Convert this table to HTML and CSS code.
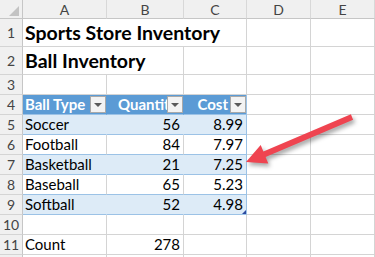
FILE: index.html
```html
<!DOCTYPE html>
<html lang="en">
<head>
<meta charset="utf-8">
<title>Sports Store Inventory</title>
<link rel="stylesheet" href="styles.css">
</head>
<body>
<div class="page">
<table class="sheet">
  <colgroup>
    <col class="c-rh"><col class="c-a"><col class="c-b"><col class="c-c"><col class="c-d"><col class="c-e">
  </colgroup>
  <thead>
    <tr class="colhead">
      <th class="corner"><svg class="corner-tri" width="10" height="10" viewBox="0 0 10 10"><polygon points="10,0 10,10 0,10" fill="#c3c3c3"/></svg></th>
      <th>A</th><th>B</th><th>C</th><th>D</th><th>E</th>
    </tr>
  </thead>
  <tbody>
    <tr class="tall">
      <th class="rh">1</th>
      <td class="title" colspan="3">Sports Store Inventory</td><td></td><td></td>
    </tr>
    <tr class="tall">
      <th class="rh">2</th>
      <td class="title" colspan="2">Ball Inventory</td><td></td><td></td><td></td>
    </tr>
    <tr>
      <th class="rh">3</th><td></td><td></td><td></td><td></td><td></td>
    </tr>
    <tr class="thead-row">
      <th class="rh">4</th>
      <td class="hcell">Ball Type<span class="filter"></span></td>
      <td class="hcell qty">Quantity<span class="filter"></span></td>
      <td class="hcell right edge">Cost<span class="filter"></span></td>
      <td></td><td></td>
    </tr>
    <tr class="band">
      <th class="rh">5</th>
      <td class="tc">Soccer</td><td class="tc num">56</td><td class="tc num edge">8.99</td><td></td><td></td>
    </tr>
    <tr class="plain">
      <th class="rh">6</th>
      <td class="tc">Football</td><td class="tc num">84</td><td class="tc num edge">7.97</td><td></td><td></td>
    </tr>
    <tr class="band">
      <th class="rh">7</th>
      <td class="tc">Basketball</td><td class="tc num">21</td><td class="tc num edge">7.25</td><td></td><td></td>
    </tr>
    <tr class="plain">
      <th class="rh">8</th>
      <td class="tc">Baseball</td><td class="tc num">65</td><td class="tc num edge">5.23</td><td></td><td></td>
    </tr>
    <tr class="band">
      <th class="rh">9</th>
      <td class="tc">Softball</td><td class="tc num">52</td><td class="tc num edge last">4.98<span class="handle"></span></td><td></td><td></td>
    </tr>
    <tr>
      <th class="rh">10</th><td></td><td></td><td></td><td></td><td></td>
    </tr>
    <tr>
      <th class="rh">11</th><td>Count</td><td class="num">278</td><td></td><td></td><td></td>
    </tr>
    <tr>
      <th class="rh"></th><td></td><td></td><td></td><td></td><td></td>
    </tr>
  </tbody>
</table>
<svg class="arrow" width="375" height="257" viewBox="0 0 375 257">
  <polygon points="350.9,114.2 263.4,151.5 260.7,145.1 246,162 268.3,163.5 265.6,157.1 353.1,119.8" fill="#ef4450"/>
</svg>
</div>
</body>
</html>
```
FILE: styles.css
```css
html, body {
  margin: 0;
  padding: 0;
  background: #ffffff;
}
body {
  width: 375px;
  height: 257px;
  overflow: hidden;
  font-family: Lato, "Liberation Sans", sans-serif;
  color: #000;
}
.page {
  position: relative;
  width: 375px;
  height: 257px;
  overflow: hidden;
}
.sheet {
  border-collapse: separate;
  border-spacing: 0;
  table-layout: fixed;
  width: 375px;
  font-size: 15px;
}
.c-rh { width: 23px; }
.c-a { width: 84px; }
.c-b { width: 77px; }
.c-c { width: 63px; }
.c-d { width: 64px; }
.c-e { width: 64px; }

.sheet th, .sheet td {
  box-sizing: border-box;
  padding: 0 2px 1px 2px;
  border-right: 1px solid #d4d4d4;
  border-bottom: 1px solid #d4d4d4;
  white-space: nowrap;
  overflow: visible;
  vertical-align: bottom;
  line-height: 17px;
  font-weight: normal;
  text-align: left;
}
.sheet tr { height: 20px; }
.sheet tr.tall { height: 28px; }
.sheet tr.colhead { height: 19px; }

.sheet .colhead th {
  background: #f0f0f0;
  color: #444;
  font-size: 14px;
  text-align: center;
  vertical-align: middle;
  padding: 0;
  border-bottom: 1px solid #c6c6c6;
  border-right: 1px solid #d8d8d8;
}
.sheet .colhead th.corner {
  position: relative;
  border-right: 1px solid #c6c6c6;
}
.corner-tri {
  position: absolute;
  right: 3px;
  bottom: 2px;
}
.sheet .rh {
  background: #f0f0f0;
  color: #444;
  font-size: 14px;
  text-align: center;
  vertical-align: middle;
  padding: 0;
  border-right: 1px solid #c6c6c6;
}
.sheet .title {
  font-weight: bold;
  font-size: 19.5px;
  line-height: 24px;
  padding-bottom: 1px;
}
.sheet .num { text-align: right; padding-right: 3px; }

.sheet .hcell {
  position: relative;
  background: #5b9bd5;
  color: #fff;
  font-weight: bold;
  border-right-color: #5b9bd5;
  border-bottom-color: #9bc2e6;
  padding-right: 18px;
  overflow: hidden;
}
.sheet .hcell.right { text-align: right; }
.sheet .hcell.qty { padding-left: 11px; }
.sheet .hcell.edge { border-right-color: #9bc2e6; }
.filter {
  position: absolute;
  right: 0;
  top: 1px;
  width: 16px;
  height: 17px;
  box-sizing: border-box;
  border: 1px solid #a9a9a9;
  background: #f3f3f3;
}
.filter::after {
  content: "";
  position: absolute;
  left: 3px;
  top: 6px;
  border-left: 4px solid transparent;
  border-right: 4px solid transparent;
  border-top: 4px solid #5a5a5a;
}
.sheet .band .tc {
  background: #ddebf7;
  border-right-color: #ddebf7;
  border-bottom-color: #9bc2e6;
}
.sheet .plain .tc {
  border-bottom-color: #9bc2e6;
}
.sheet .tc.edge { border-right-color: #9bc2e6; }
.sheet .tc.last { position: relative; }
.handle {
  position: absolute;
  right: 0;
  bottom: 0;
  width: 4px;
  height: 4px;
  background: #2b4aa0;
  clip-path: polygon(100% 0, 100% 100%, 0 100%);
}
.arrow {
  position: absolute;
  left: 0;
  top: 0;
  pointer-events: none;
  filter: drop-shadow(2px 3px 2px rgba(0, 0, 0, 0.35));
}
```
